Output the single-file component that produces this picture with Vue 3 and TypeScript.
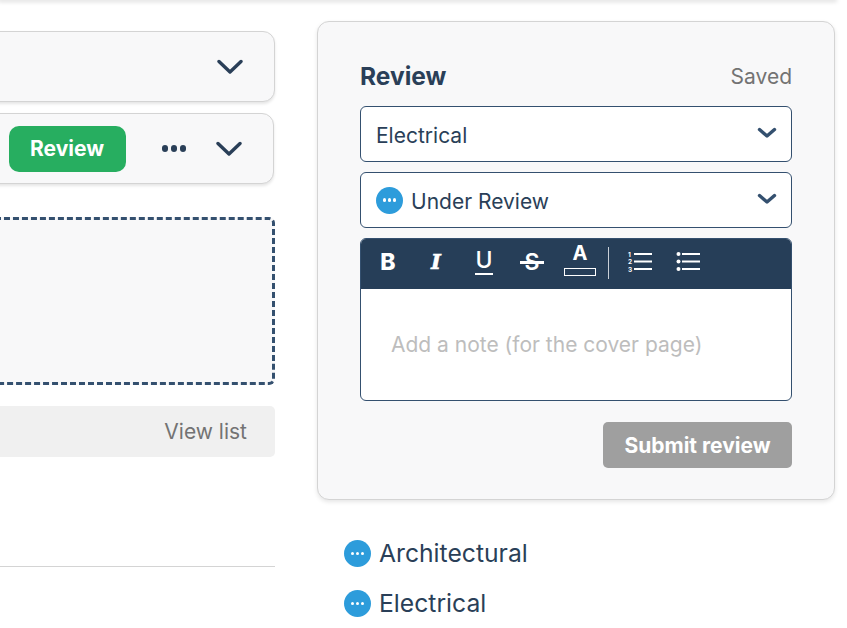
<script setup lang="ts">
const statuses: string[] = ['Architectural', 'Electrical']
</script>

<template>
  <div class="page">
    <div class="topbar"></div>
    <div class="columns">
      <section class="left">
        <div class="row row-one">
          <svg class="chev" width="26" height="16" viewBox="0 0 26 16"><path d="M2 2.5 L13 13 L24 2.5" /></svg>
        </div>
        <div class="row row-two">
          <button class="review-btn">Review</button>
          <span class="more"><i></i><i></i><i></i></span>
          <svg class="chev" width="26" height="16" viewBox="0 0 26 16"><path d="M2 2.5 L13 13 L24 2.5" /></svg>
        </div>
        <div class="drop"></div>
        <div class="viewlist">View list</div>
        <div class="rule"></div>
      </section>
      <aside class="right">
        <div class="panel">
          <header class="panel-head">
            <h2>Review</h2>
            <span class="saved">Saved</span>
          </header>
          <div class="select">
            <span>Electrical</span>
            <svg class="mini" width="20" height="12" viewBox="0 0 20 12"><path d="M2.5 2.5 L10 9 L17.5 2.5" /></svg>
          </div>
          <div class="select">
            <span class="status-dot small"><i></i><i></i><i></i></span>
            <span class="status-text">Under Review</span>
            <svg class="mini" width="20" height="12" viewBox="0 0 20 12"><path d="M2.5 2.5 L10 9 L17.5 2.5" /></svg>
          </div>
          <div class="editor">
            <div class="toolbar">
              <span class="tool bold">B</span>
              <span class="tool ital">I</span>
              <span class="tool under">U</span>
              <span class="tool strike">S</span>
              <span class="tool color">A<b></b></span>
              <span class="sep"></span>
              <svg class="listicon first" width="26" height="24" viewBox="0 0 26 24">
                <text x="1" y="6.5" class="num">1</text>
                <text x="1" y="14" class="num">2</text>
                <text x="1" y="21.5" class="num">3</text>
                <rect x="7" y="3" width="18" height="2" /><rect x="7" y="10.5" width="18" height="2" /><rect x="7" y="18" width="18" height="2" />
              </svg>
              <svg class="listicon" width="26" height="24" viewBox="0 0 26 24">
                <circle cx="3.5" cy="4" r="2" /><circle cx="3.5" cy="11.5" r="2" /><circle cx="3.5" cy="19" r="2" />
                <rect x="7" y="3" width="18" height="2" /><rect x="7" y="10.5" width="18" height="2" /><rect x="7" y="18" width="18" height="2" />
              </svg>
            </div>
            <div class="note">Add a note (for the cover page)</div>
          </div>
          <div class="actions"><button class="submit">Submit review</button></div>
        </div>
        <ul class="statuses">
          <li v-for="s in statuses" :key="s">
            <span class="status-dot"><i></i><i></i><i></i></span>
            <span>{{ s }}</span>
          </li>
        </ul>
      </aside>
    </div>
  </div>
</template>

<style>
html, body { margin: 0; background: #fff; overflow: hidden; }
</style>

<style scoped>
.page {
  width: 847px;
  height: 628px;
  overflow: hidden;
  font-family: Inter, "Liberation Sans", sans-serif;
  color: #2a3f58;
  background: #fff;
}
.topbar {
  height: 0;
  width: 835px;
  box-shadow: 0 0 4px 2px rgba(0, 0, 0, 0.13);
}
.columns {
  display: flex;
  align-items: flex-start;
  margin-left: -20px;
}
.left {
  width: 295px;
  padding-top: 31px;
  flex: none;
}
.right {
  width: 518px;
  margin-left: 42px;
  padding-top: 21px;
  flex: none;
}
.row {
  box-sizing: border-box;
  height: 71px;
  border: 1px solid #d4d4d4;
  border-radius: 12px;
  background: #f8f8f9;
  box-shadow: 0 2px 3px rgba(0, 0, 0, 0.1);
  display: flex;
  align-items: center;
  justify-content: flex-end;
}
.row-one { padding-right: 31px; }
.row-two {
  margin-top: 11px;
  width: 294px;
  padding-right: 31px;
}
.chev { margin-top: 1px; }
.chev path {
  fill: none;
  stroke: #2a3f58;
  stroke-width: 3.4;
  stroke-linecap: round;
  stroke-linejoin: round;
}
.review-btn {
  width: 117px;
  height: 46px;
  border: 0;
  border-radius: 10px;
  background: #27ae60;
  color: #fff;
  font: 700 21px Inter, sans-serif;
  margin-right: 36px;
  padding: 0;
}
.more {
  display: flex;
  gap: 2.5px;
  margin-right: 30px;
}
.more i {
  width: 6.5px;
  height: 6.5px;
  border-radius: 50%;
  background: #2a3f58;
}
.drop {
  box-sizing: border-box;
  margin-top: 33px;
  height: 168px;
  border: 3px dashed #34506f;
  border-radius: 6px;
  background: #f8f8f9;
}
.viewlist {
  box-sizing: border-box;
  margin-top: 21px;
  height: 51px;
  border-radius: 5px;
  background: #f0f0f0;
  color: #737373;
  font-size: 21px;
  line-height: 52px;
  text-align: right;
  padding-right: 28px;
}
.rule {
  margin-top: 109px;
  height: 1px;
  background: #d4d4d4;
}
.panel {
  box-sizing: border-box;
  height: 479px;
  border: 1px solid #d4d4d4;
  border-radius: 12px;
  background: #f8f8f9;
  box-shadow: 0 2px 4px rgba(0, 0, 0, 0.1);
  padding: 0 42px;
}
.panel-head {
  height: 84px;
  display: flex;
  justify-content: space-between;
  align-items: flex-end;
  padding-bottom: 14px;
  box-sizing: border-box;
  line-height: 30px;
}
h2 { margin: 0 0 1px; font-size: 24.5px; font-weight: 700; }
.saved { font-size: 21px; color: #737373; }
.select {
  box-sizing: border-box;
  height: 56px;
  border: 1px solid #34506f;
  border-radius: 6px;
  background: #fff;
  margin-bottom: 10px;
  padding: 2px 15px 0;
  display: flex;
  align-items: center;
  font-size: 21px;
}
.mini { margin-left: auto; margin-top: -4px; transform: translateX(1px); }
.mini path {
  fill: none;
  stroke: #34506f;
  stroke-width: 3.4;
  stroke-linecap: round;
  stroke-linejoin: round;
}
.status-dot {
  width: 27px;
  height: 27px;
  border-radius: 50%;
  background: #2d9cdb;
  display: inline-flex;
  align-items: center;
  justify-content: center;
  gap: 1.5px;
  flex: none;
}
.status-dot i {
  width: 3.5px;
  height: 3.5px;
  border-radius: 50%;
  background: #fff;
}
.small { margin-top: -2px; }
.status-text { margin-left: 8px; }
.editor {
  box-sizing: border-box;
  height: 163px;
  border: 1px solid #34506f;
  border-radius: 6px;
  background: #fff;
  overflow: hidden;
}
.toolbar {
  height: 51px;
  background: #263e58;
  display: flex;
  align-items: center;
  color: #fff;
  position: relative;
  margin: -1px -1px 0;
}
.tool {
  position: absolute;
  top: 10px;
  font-size: 23px;
  line-height: 28px;
  font-weight: 700;
  text-align: center;
  width: 26px;
}
.bold { left: 15px; font-weight: 800; }
.ital {
  left: 63px;
  font-style: italic;
  font-weight: 700;
  font-family: "DejaVu Serif", serif;
  font-size: 21px;
  -webkit-text-stroke: 0.6px #fff;
}
.under { left: 111px; font-weight: 500; border-bottom: 2.5px solid #fff; width: 18px; margin-left: 4px; line-height: 25px; }
.strike { left: 159px; font-weight: 600; }
.strike::after {
  content: "";
  position: absolute;
  left: 1px;
  right: 1px;
  top: 13px;
  height: 2.5px;
  background: #fff;
}
.color {
  left: 204px;
  width: 32px;
  top: 3px;
  font-size: 20px;
  line-height: 24px;
}
.color b {
  display: block;
  box-sizing: border-box;
  height: 8px;
  border: 1px solid #fff;
  margin-top: 3px;
}
.sep {
  position: absolute;
  left: 248px;
  top: 9px;
  width: 1px;
  height: 32px;
  background: #c9d0d8;
}
.listicon {
  position: absolute;
  top: 12px;
  left: 315px;
  fill: #fff;
}
.listicon.first { left: 267px; }
.num { font-size: 6.5px; font-weight: 700; fill: #fff; }
.note {
  padding: 44px 30px 0;
  font-size: 21px;
  line-height: 24px;
  color: #bdbdbd;
}
.actions {
  display: flex;
  justify-content: flex-end;
  margin-top: 21px;
}
.submit {
  width: 189px;
  height: 46px;
  border: 0;
  border-radius: 5px;
  background: #9f9f9f;
  color: #fff;
  font: 700 21px Inter, sans-serif;
  padding: 0;
}
.statuses {
  list-style: none;
  margin: 0;
  padding: 40px 0 0 27px;
  font-size: 24.7px;
}
.statuses li {
  height: 27px;
  margin-bottom: 23px;
  display: flex;
  align-items: center;
  gap: 8px;
  line-height: 25px;
}
</style>
